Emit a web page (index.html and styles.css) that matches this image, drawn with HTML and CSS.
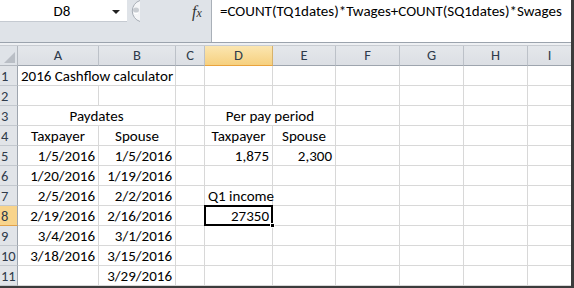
FILE: index.html
```html
<!DOCTYPE html>
<html lang="en">
<head>
    <meta charset="UTF-8">
    <meta name="viewport" content="width=device-width, initial-scale=1.0">
    <title>2016 Cashflow calculator</title>
    <link rel="stylesheet" href="styles.css">
</head>
<body>
    <div class="window">
        <!-- formula bar -->
        <div class="topbar">
            <div class="name-area">
                <div class="namebox">
                    <span class="cell-ref">D8</span>
                    <span class="dropdown"></span>
                </div>
                <div class="grip">
                    <svg width="14" height="22" viewBox="0 0 14 22">
                        <path d="M13 0.5 A 11 11 0 0 0 13 21.5" fill="#f4f5f7" stroke="#a7adb5" stroke-width="1"/>
                        <ellipse cx="9" cy="10" rx="3" ry="2.5" fill="#c9cdd2"/>
                        <rect x="7" y="13" width="4" height="1" fill="#ffffff"/>
                    </svg>
                </div>
                <div class="fx"><i>f</i><span>x</span></div>
            </div>
            <div class="formula">=COUNT(TQ1dates)*Twages+COUNT(SQ1dates)*Swages</div>
        </div>
        <div class="strip"></div>

        <!-- worksheet -->
        <div class="sheet">
            <div class="corner"><span class="tri"></span></div>
            <div class="col-head">A</div>
            <div class="col-head">B</div>
            <div class="col-head">C</div>
            <div class="col-head selected">D</div>
            <div class="col-head">E</div>
            <div class="col-head">F</div>
            <div class="col-head">G</div>
            <div class="col-head">H</div>
            <div class="col-head last">I</div>

            <div class="row-head">1</div>
            <div class="cell span2">2016 Cashflow calculator</div>
            <div class="cell"></div><div class="cell"></div><div class="cell"></div><div class="cell"></div><div class="cell"></div><div class="cell"></div><div class="cell last"></div>

            <div class="row-head">2</div>
            <div class="cell"></div><div class="cell"></div><div class="cell"></div><div class="cell"></div><div class="cell"></div><div class="cell"></div><div class="cell"></div><div class="cell"></div><div class="cell last"></div>

            <div class="row-head">3</div>
            <div class="cell span2 center">Paydates</div>
            <div class="cell"></div>
            <div class="cell span2 center">Per pay period</div>
            <div class="cell"></div><div class="cell"></div><div class="cell"></div><div class="cell last"></div>

            <div class="row-head">4</div>
            <div class="cell center">Taxpayer</div>
            <div class="cell center">Spouse</div>
            <div class="cell"></div>
            <div class="cell center">Taxpayer</div>
            <div class="cell center">Spouse</div>
            <div class="cell"></div><div class="cell"></div><div class="cell"></div><div class="cell last"></div>

            <div class="row-head">5</div>
            <div class="cell num">1/5/2016</div>
            <div class="cell num">1/5/2016</div>
            <div class="cell"></div>
            <div class="cell num">1,875</div>
            <div class="cell num">2,300</div>
            <div class="cell"></div><div class="cell"></div><div class="cell"></div><div class="cell last"></div>

            <div class="row-head">6</div>
            <div class="cell num">1/20/2016</div>
            <div class="cell num">1/19/2016</div>
            <div class="cell"></div><div class="cell"></div><div class="cell"></div><div class="cell"></div><div class="cell"></div><div class="cell"></div><div class="cell last"></div>

            <div class="row-head">7</div>
            <div class="cell num">2/5/2016</div>
            <div class="cell num">2/2/2016</div>
            <div class="cell"></div>
            <div class="cell">Q1 income</div>
            <div class="cell"></div><div class="cell"></div><div class="cell"></div><div class="cell"></div><div class="cell last"></div>

            <div class="row-head selected">8</div>
            <div class="cell num">2/19/2016</div>
            <div class="cell num">2/16/2016</div>
            <div class="cell"></div>
            <div class="cell num active">27350<span class="handle"></span></div>
            <div class="cell"></div><div class="cell"></div><div class="cell"></div><div class="cell"></div><div class="cell last"></div>

            <div class="row-head">9</div>
            <div class="cell num">3/4/2016</div>
            <div class="cell num">3/1/2016</div>
            <div class="cell"></div><div class="cell"></div><div class="cell"></div><div class="cell"></div><div class="cell"></div><div class="cell"></div><div class="cell last"></div>

            <div class="row-head">10</div>
            <div class="cell num">3/18/2016</div>
            <div class="cell num">3/15/2016</div>
            <div class="cell"></div><div class="cell"></div><div class="cell"></div><div class="cell"></div><div class="cell"></div><div class="cell"></div><div class="cell last"></div>

            <div class="row-head">11</div>
            <div class="cell"></div>
            <div class="cell num">3/29/2016</div>
            <div class="cell"></div><div class="cell"></div><div class="cell"></div><div class="cell"></div><div class="cell"></div><div class="cell"></div><div class="cell last"></div>
        </div>
    </div>
</body>
</html>
```

FILE: styles.css
```css
* {
    margin: 0;
    padding: 0;
    box-sizing: border-box;
}

body {
    font-family: Carlito, Calibri, 'Lato', sans-serif;
    color: #000;
    background-color: #fff;
}

.window {
    width: 574px;
    height: 288px;
    overflow: hidden;
    border-right: 3px solid #3c3c3c;
    border-bottom: 2px solid #3c3c3c;
    background-color: #dfe3e8;
}

/* formula bar */
.topbar {
    display: flex;
    height: 43px;
    border-bottom: 1px solid #9ba3ad;
}

.name-area {
    display: flex;
    align-items: flex-start;
    flex-shrink: 0;
    width: 211px;
    background-color: #dfe3e8;
}

.namebox {
    display: flex;
    align-items: center;
    width: 127px;
    height: 22px;
    background-color: #fff;
    border-bottom: 1px solid #c5cad1;
    position: relative;
}

.cell-ref {
    width: 100%;
    text-align: center;
    font-size: 15px;
    padding-right: 3px;
}

.dropdown {
    position: absolute;
    right: 7px;
    top: 10px;
    border-left: 4px solid transparent;
    border-right: 4px solid transparent;
    border-top: 4px solid #222;
}

.grip {
    height: 22px;
    display: flex;
}

.fx {
    margin-left: 51px;
    margin-top: 3px;
    font-family: 'Liberation Serif', serif;
    font-size: 16px;
    color: #333;
}

.fx span {
    font-size: 12px;
    font-style: italic;
}

.formula {
    flex: 1;
    min-width: 0;
    background-color: #fff;
    border-left: 1px solid #a9b0b8;
    font-size: 15px;
    padding: 2px 0 0 8px;
    white-space: nowrap;
}

.strip {
    height: 3px;
    border-bottom: 1px solid #c8ccd2;
    background-color: #eef0f3;
}

/* grid */
.sheet {
    display: grid;
    grid-template-columns: 18px 81px 77px 29px 68px 63px 64px 64px 64px 1fr;
    grid-auto-rows: 20px;
    grid-template-rows: 20px;
    background-color: #fff;
    font-size: 15px;
}

.corner {
    background-color: #dfe3e8;
    border-right: 1px solid #b3b8bf;
    border-bottom: 1px solid #b3b8bf;
    position: relative;
}

.tri {
    position: absolute;
    right: 2px;
    bottom: 2px;
    border-left: 11px solid transparent;
    border-bottom: 11px solid #b9bec5;
}

.col-head {
    background: linear-gradient(#e4e7eb, #dcdfe4);
    border-right: 1px solid #bcc1c8;
    border-bottom: 1px solid #9ea5ae;
    text-align: center;
    font-size: 14.5px;
    line-height: 19px;
    color: #2f3b4b;
}

.col-head.selected {
    background: linear-gradient(#fbe6b1, #f6d07f);
    border-bottom: 1px solid #e9a33d;
    border-right: 1px solid #d7b26b;
}

.col-head.last {
    border-right: none;
}

.row-head {
    background-color: #e1e4e8;
    border-right: 1px solid #9ea5ae;
    border-bottom: 1px solid #c3c8ce;
    font-size: 14.5px;
    line-height: 20px;
    padding-left: 1px;
    color: #2f3b4b;
}

.row-head.selected {
    background-color: #f8d48c;
    border-bottom: 1px solid #e2a24a;
}

.cell {
    border-right: 1px solid #d8d8d8;
    border-bottom: 1px solid #d8d8d8;
    line-height: 20px;
    padding: 0 3px;
    white-space: nowrap;
    overflow: visible;
}

.cell.last {
    border-right: none;
}

.span2 {
    grid-column: span 2;
}

.center {
    text-align: center;
}

.num {
    text-align: right;
}

.active {
    position: relative;
    border: 2px solid #000;
    margin: -1px 0 0 -1px;
    line-height: 18px;
    padding-right: 2px;
}

.handle {
    position: absolute;
    right: -4px;
    bottom: -4px;
    width: 5px;
    height: 5px;
    background-color: #000;
    border: 1px solid #fff;
}
```
